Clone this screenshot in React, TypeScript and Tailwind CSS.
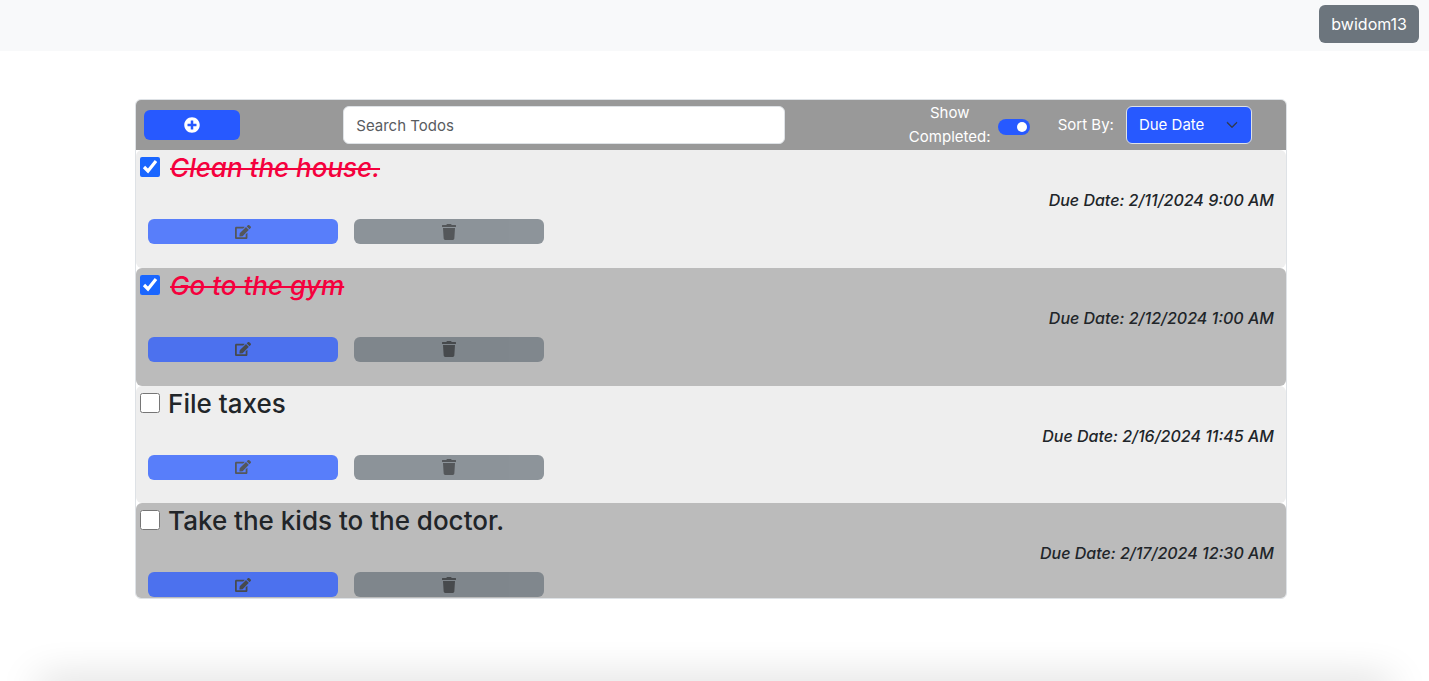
import { useState } from "react";
import { FaEdit, FaPlusCircle, FaTrash } from "react-icons/fa";
import { BsChevronDown } from "react-icons/bs";
import clsx from "clsx";

type Todo = { id: number; title: string; due: string; done: boolean };

const initialTodos: Todo[] = [
  { id: 1, title: "Clean the house.", due: "2/11/2024 9:00 AM", done: true },
  { id: 2, title: "Go to the gym", due: "2/12/2024 1:00 AM", done: true },
  { id: 3, title: "File taxes", due: "2/16/2024 11:45 AM", done: false },
  { id: 4, title: "Take the kids to the doctor.", due: "2/17/2024 12:30 AM", done: false },
];

function TodoRow({ todo, onToggle }: { todo: Todo; onToggle: () => void }) {
  return (
    <li className="flex flex-col rounded-md odd:bg-[#eeeeee] even:bg-[#bbbbbb]">
      <label className={clsx("flex h-9 items-start pl-1", todo.done ? "gap-2.5" : "gap-2")}>
        <input type="checkbox" checked={todo.done} onChange={onToggle} className="mt-[7px] size-5 accent-[#1a66ff]" />
        <span
          className={clsx(
            "text-[26px] leading-9 font-medium",
            todo.done && "text-[#f5003d] italic line-through decoration-2",
          )}
        >
          {todo.title}
        </span>
      </label>
      <p className="pr-3 pb-1 text-right leading-7 font-medium italic">Due Date: {todo.due}</p>
      <div className="grid grid-cols-[repeat(2,16.7%)] gap-4 pl-3 pt-px text-[#212529] opacity-75">
        <button type="button" aria-label="Edit" className="flex h-[25px] items-center justify-center rounded-md bg-[#2759ff]">
          <FaEdit />
        </button>
        <button type="button" aria-label="Delete" className="flex h-[25px] items-center justify-center rounded-md bg-[#6c757d]">
          <FaTrash />
        </button>
      </div>
    </li>
  );
}

export default function App() {
  const [todos, setTodos] = useState(initialTodos);
  const [query, setQuery] = useState("");
  const [showCompleted, setShowCompleted] = useState(true);
  const [sortBy, setSortBy] = useState("due");

  const visible = todos
    .filter((t) => (showCompleted || !t.done) && t.title.toLowerCase().includes(query.toLowerCase()))
    .sort((a, b) => (sortBy === "title" ? a.title.localeCompare(b.title) : a.id - b.id));

  const toggle = (id: number) => setTodos(todos.map((t) => (t.id === id ? { ...t, done: !t.done } : t)));

  return (
    <div className="flex h-screen flex-col overflow-hidden bg-white font-['Inter',sans-serif] text-base text-[#212529]">
      <nav className="flex justify-end bg-[#f8f9fa] px-2.5 pt-[5px] pb-2">
        <button type="button" className="h-[38px] rounded-md bg-[#6c757d] px-3 text-base text-white">
          bwidom13
        </button>
      </nav>

      <main className="flex-1 pt-12 pr-[7px]">
        <section className="mx-auto flex w-[81%] flex-col overflow-hidden rounded-md border border-[#dee2e6]">
          <header className="flex h-[50px] items-center bg-[#999999] px-2 text-[15px] text-white">
            <button type="button" aria-label="Add todo" className="flex h-[30px] w-24 items-center justify-center rounded-md bg-[#2759ff] text-base">
              <FaPlusCircle />
            </button>
            <input
              type="text"
              aria-label="Search Todos"
              placeholder="Search Todos"
              value={query}
              onChange={(e) => setQuery(e.target.value)}
              className="ml-[9.1%] h-[38px] w-[39%] rounded-md border border-[#dee2e6] bg-white px-3 text-[#212529] placeholder:text-[#595c5f]"
            />
            <div className="ml-auto flex items-center pr-[26px]">
              <label htmlFor="show-completed" className="w-[84px] text-center leading-6">
                Show Completed:
              </label>
              <input
                id="show-completed"
                type="checkbox"
                role="switch"
                checked={showCompleted}
                onChange={(e) => setShowCompleted(e.target.checked)}
                className="mt-1 ml-1.5 flex h-4 w-8 appearance-none items-center rounded-full bg-[#adb5bd] px-[3px] before:size-2.5 before:rounded-full before:bg-white checked:justify-end checked:bg-[#2759ff]"
              />
              <label htmlFor="sort-by" className="ml-7">
                Sort By:
              </label>
              <div className="relative ml-3">
                <select
                  id="sort-by"
                  value={sortBy}
                  onChange={(e) => setSortBy(e.target.value)}
                  className="h-[38px] w-[126px] appearance-none rounded-md border border-[#dee2e6] bg-[#2759ff] pl-3 text-white"
                >
                  <option value="due">Due Date</option>
                  <option value="title">Title</option>
                </select>
                <BsChevronDown className="pointer-events-none absolute top-[13px] right-3.5 size-3 stroke-1 text-[#343a40]" />
              </div>
            </div>
          </header>

          <div className="h-[448px] overflow-y-auto [scrollbar-width:none]">
            <ul className="grid h-[471px] auto-rows-fr">
              {visible.map((t) => (
                <TodoRow key={t.id} todo={t} onToggle={() => toggle(t.id)} />
              ))}
            </ul>
          </div>
        </section>
      </main>

      <footer className="mx-12 h-0 shrink-0 shadow-[0_10px_40px_10px_rgba(0,0,0,0.2)]" />
    </div>
  );
}
